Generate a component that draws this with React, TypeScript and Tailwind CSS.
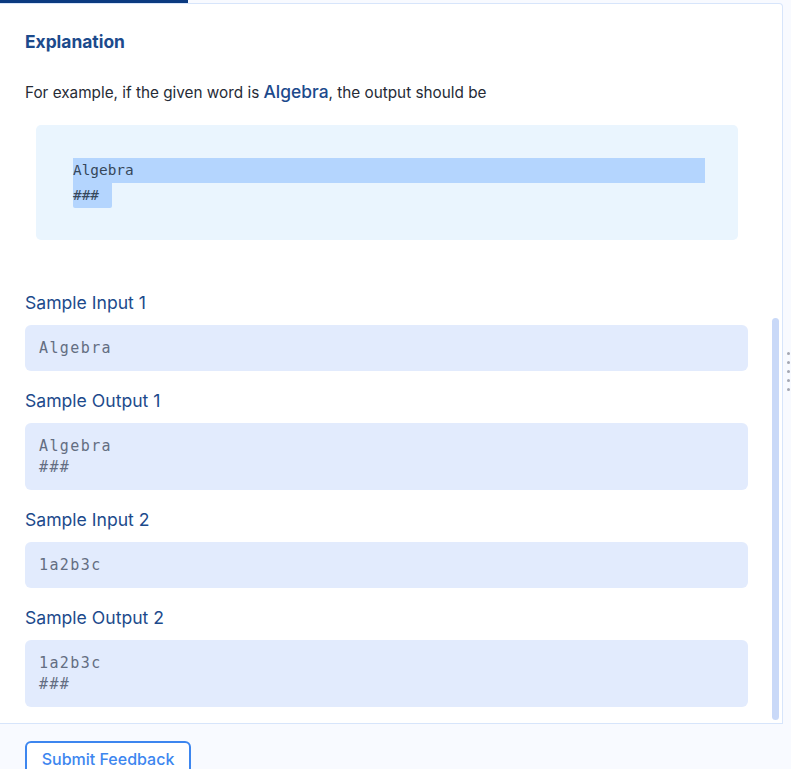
import React from "react";

const samples = [
  { title: "Sample Input 1", lines: ["Algebra"] },
  { title: "Sample Output 1", lines: ["Algebra", "###"] },
  { title: "Sample Input 2", lines: ["1a2b3c"] },
  { title: "Sample Output 2", lines: ["1a2b3c", "###"] },
];

export default function App() {
  return (
    <div className="relative w-[791px] h-[769px] overflow-hidden bg-[#f8faff] font-['Inter',sans-serif]">
      {/* tab indicator */}
      <div className="h-[3px] w-[188px] bg-[#0b3a80]" />

      {/* panel */}
      <div className="relative w-[783px] h-[721px] bg-white border-t border-r border-b border-[#d7e5fb] rounded-tr-[4px] overflow-hidden">
        <div className="px-[25px] pt-[26px]">
          <h2 className="text-[17.4px] leading-[24px] font-bold text-[#1c4a8c]">Explanation</h2>

          <p className="mt-[26px] text-[15.3px] leading-[24px] text-[#262b36]">
            For example, if the given word is{" "}
            <span className="text-[17.4px] font-medium text-[#1c4a8c]">Algebra</span>, the output should be
          </p>

          <div className="mt-[20px] ml-[11px] w-[702px] h-[115px] rounded-[5px] bg-[#eaf5fe] pl-[37px] pr-[33px] pt-[33px] font-['DejaVu_Sans_Mono',monospace] text-[14.4px] leading-[25px] text-[#36475a]">
            <div className="bg-[#b4d5fe]">Algebra</div>
            <div className="inline-block bg-[#b4d5fe] pr-[13px] rounded-b-[2px]">###</div>
          </div>

          <div className="mt-[51px] flex flex-col">
            {samples.map((s, i) => (
              <div key={i} className={i === 0 ? "" : "mt-[18px]"}>
                <div className="text-[17.6px] leading-[24px] text-[#1c4a8c]">{s.title}</div>
                <div className="mt-[10px] w-[723px] rounded-[6px] bg-[#e2ebfd] px-[14px] pt-[13px] pb-[12px] font-['DejaVu_Sans_Mono',monospace] text-[15px] leading-[21px] tracking-[1.4px] text-[#646e82]">
                  {s.lines.map((l, j) => (
                    <div key={j}>{l}</div>
                  ))}
                </div>
              </div>
            ))}
          </div>
        </div>

        {/* scrollbar */}
        <div className="absolute left-[772px] top-[314px] w-[7px] h-[402px] rounded-full bg-[#c9d9f8]" />
      </div>

      {/* resize handle */}
      <div className="absolute left-[787px] top-[352px] flex flex-col gap-[6px]">
        {[0, 1, 2, 3, 4].map((d) => (
          <div key={d} className="w-[3px] h-[3px] rounded-full bg-[#a3a7b3]" />
        ))}
      </div>

      <div className="px-[25px] pt-[17px]">
        <button className="w-[166px] h-[40px] rounded-[6px] border-2 border-[#3d86ef] bg-white text-[16px] font-medium text-[#3d86ef] pb-[4px]">
          Submit Feedback
        </button>
      </div>
    </div>
  );
}
